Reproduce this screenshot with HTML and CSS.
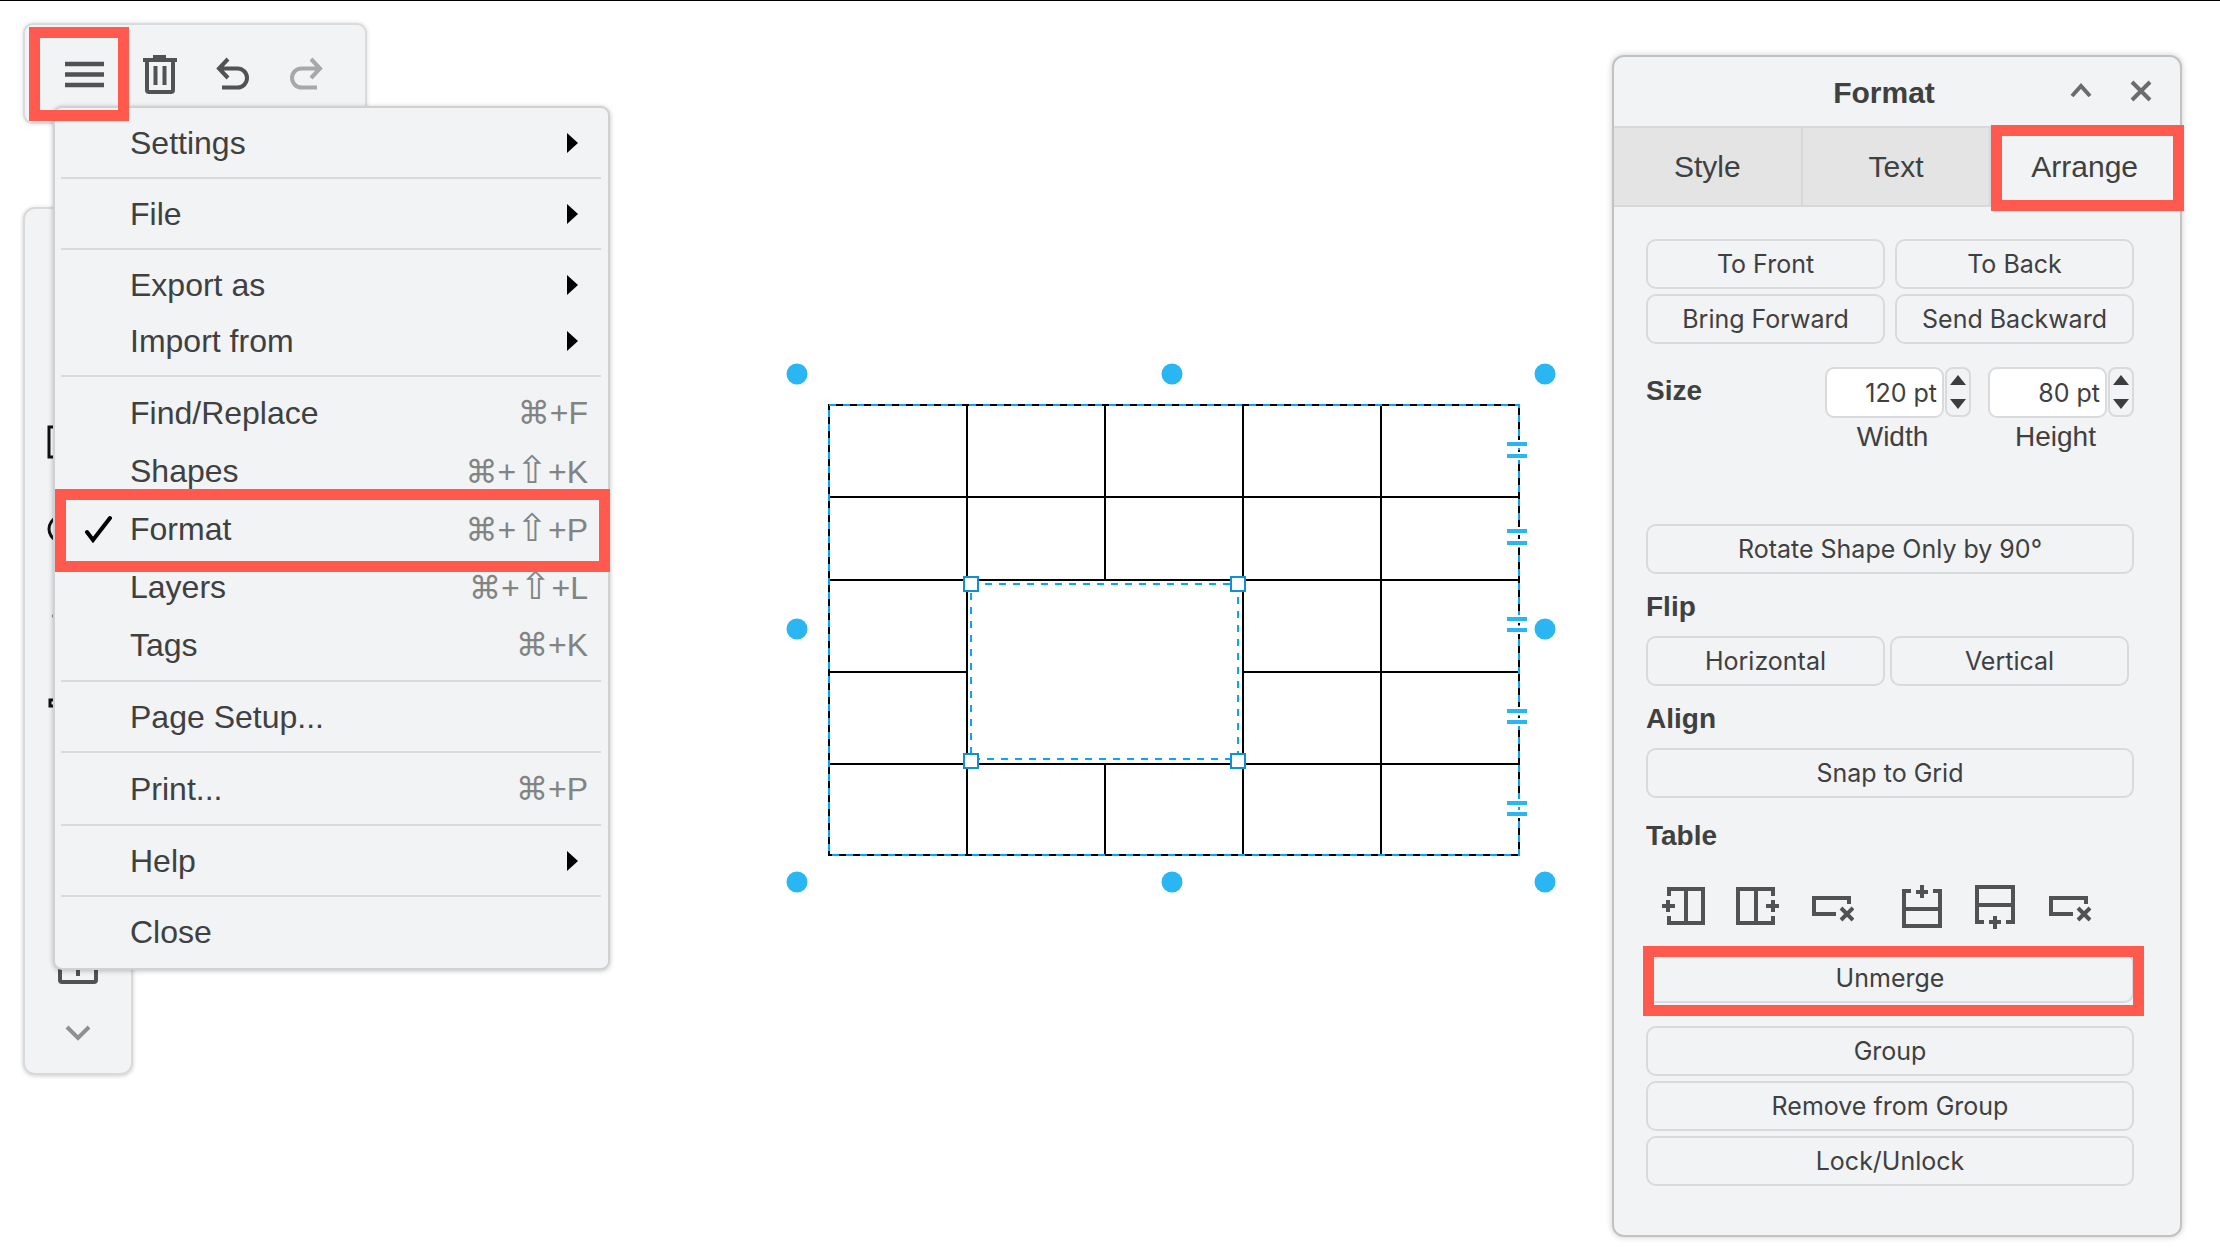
FILE: index.html
```
<!DOCTYPE html>
<html lang="en">
<head>
  <meta charset="UTF-8">
  <meta name="viewport" content="width=device-width, initial-scale=1.0">
  <title>Diagram editor</title>
  <link rel="stylesheet" href="styles.css">
</head>
<body>
  <div class="app">
    <div class="left">
      <div class="toolbar">
        <button class="tool marked" aria-label="Menu">
          <svg width="40" height="40" viewBox="0 0 40 40"><path d="M0 10h39M0 20.500h39M0 31h39" stroke="#505352" stroke-width="4.500"/></svg>
        </button>
        <button class="tool" aria-label="Delete">
          <svg width="36" height="40" viewBox="0 0 36 40" fill="none" stroke="#505352"><path d="M1 6h34M11 3h13" stroke-width="4"/><path d="M5 6v30q0 2 2 2h22q2 0 2-2V6" stroke-width="4"/><path d="M13.500 12v19M22.500 12v19" stroke-width="4"/></svg>
        </button>
        <button class="tool" aria-label="Undo">
          <svg width="36" height="40" viewBox="0 0 36 40" fill="none" stroke="#505352" stroke-width="4"><path d="M13 5L4 14.500l9 9.500M4 14.500h18.500a9.500 9.500 0 0 1 0 19H7"/></svg>
        </button>
        <button class="tool" aria-label="Redo" disabled>
          <svg width="36" height="40" viewBox="0 0 36 40" fill="none" stroke="#a7a9a9" stroke-width="4"><path d="M23 5l9 9.500-9 9.500M32 14.500H13.500a9.500 9.500 0 0 0 0 19H29"/></svg>
        </button>
      </div>

      <div class="sidebar">
        <button class="shape" aria-label="Search"><svg width="30" height="30" viewBox="0 0 30 30" fill="none" stroke="#505352" stroke-width="3"><circle cx="12" cy="12" r="8"/><path d="M18 18l9 9"/></svg></button>
        <button class="shape" aria-label="Note"><svg width="30" height="30" viewBox="0 0 30 30" fill="none" stroke="#111" stroke-width="3"><path d="M3 3h24v17l-7 7H3z"/></svg></button>
        <button class="shape" aria-label="Rectangle"><svg width="62" height="34" viewBox="0 0 62 34" fill="#fff" stroke="#111" stroke-width="3"><path d="M2 2h58v30H2z"/></svg></button>
        <button class="shape" aria-label="Ellipse"><svg width="62" height="40" viewBox="0 0 62 40" fill="#fff" stroke="#111" stroke-width="3"><ellipse cx="31" cy="20" rx="29" ry="18"/></svg></button>
        <button class="shape" aria-label="Line"><svg width="52" height="6" viewBox="0 0 52 6" fill="none" stroke="#8a8c8c" stroke-width="3"><path d="M0 3h52"/></svg></button>
        <button class="shape" aria-label="Connector"><svg width="60" height="10" viewBox="0 0 60 10" fill="#fff" stroke="#111" stroke-width="3"><path d="M2 2h6v6H2zM8 5h44M52 2h6v6h-6z"/></svg></button>
        <button class="shape" aria-label="Freehand"><svg width="30" height="30" viewBox="0 0 30 30" fill="none" stroke="#505352" stroke-width="3"><path d="M3 24c8-22 14 8 24-18"/></svg></button>
        <button class="shape" aria-label="Table"><svg width="30" height="30" viewBox="0 0 30 30" fill="none" stroke="#505352" stroke-width="3"><path d="M3 3h24v24H3zM3 15h24M15 3v24"/></svg></button>
        <button class="shape" aria-label="Insert"><svg width="40" height="40" viewBox="0 0 40 40" fill="none" stroke="#505352" stroke-width="4"><rect x="2" y="2" width="36" height="36" rx="2"/><path d="M20 8v24M8 20h24"/></svg></button>
        <button class="more" aria-label="More"><svg width="26" height="18" viewBox="0 0 26 18" fill="none" stroke="#8f9191" stroke-width="4"><path d="M2 3l11 11L24 3"/></svg></button>
      </div>
    </div>

    <div class="canvas">
      <svg width="772" height="532" viewBox="786 362 772 532" fill="none">
        <!-- table grid -->
        <g stroke="#000" stroke-width="2">
          <rect x="830" y="405" width="690" height="450"/>
          <path d="M830 497h690M830 580h690M830 672h138M1244 672h276M830 764h690"/>
          <path d="M968 405v450M1106 405v175M1106 764v91M1244 405v450M1382 405v450"/>
        </g>
        <!-- selection outlines -->
        <g stroke="#00a8ff" stroke-width="2" stroke-dasharray="7 7">
          <rect x="830" y="405" width="690" height="450"/>
          <rect x="972" y="584" width="267" height="175"/>
        </g>
        <!-- merged cell handles -->
        <g fill="#fff" stroke="#0e8fd6" stroke-width="2">
          <rect x="965" y="577" width="14" height="14"/>
          <rect x="1232" y="577" width="14" height="14"/>
          <rect x="965" y="754" width="14" height="14"/>
          <rect x="1232" y="754" width="14" height="14"/>
        </g>
        <!-- row resize handles -->
        <g stroke="#fff" stroke-width="8">
          <path d="M1508 444h20M1508 456h20M1508 531h20M1508 543h20M1508 619h20M1508 630h20M1508 711h20M1508 722h20M1508 803h20M1508 814h20"/>
        </g>
        <g stroke="#29b6f2" stroke-width="4">
          <path d="M1508 444h20M1508 456h20M1508 531h20M1508 543h20M1508 619h20M1508 630h20M1508 711h20M1508 722h20M1508 803h20M1508 814h20"/>
        </g>
        <g fill="#29b6f2">
          <circle cx="798" cy="374" r="10.500"/>
          <circle cx="1173" cy="374" r="10.500"/>
          <circle cx="1546" cy="374" r="10.500"/>
          <circle cx="798" cy="629" r="10.500"/>
          <circle cx="1546" cy="629" r="10.500"/>
          <circle cx="798" cy="882" r="10.500"/>
          <circle cx="1173" cy="882" r="10.500"/>
          <circle cx="1546" cy="882" r="10.500"/>
        </g>
      </svg>
    </div>

    <div class="panel">
      <div class="panel-head">
        <h2>Format</h2>
        <button class="head-btn" aria-label="Collapse"><svg width="22" height="22" viewBox="0 0 22 22" fill="none" stroke="#6b6d6d" stroke-width="4"><path d="M2 16l9-10 9 10"/></svg></button>
        <button class="head-btn" aria-label="Close panel"><svg width="22" height="22" viewBox="0 0 22 22" fill="none" stroke="#6b6d6d" stroke-width="4"><path d="M2 2l18 18M20 2L2 20"/></svg></button>
      </div>
      <div class="tabs">
        <button class="tab">Style</button>
        <button class="tab">Text</button>
        <button class="tab active marked">Arrange</button>
      </div>

      <div class="panel-body">
        <div class="pair">
          <button class="btn">To Front</button>
          <button class="btn">To Back</button>
          <button class="btn">Bring Forward</button>
          <button class="btn">Send Backward</button>
        </div>

        <div class="size">
          <h3>Size</h3>
          <div class="field">
            <div class="spin">
              <input type="text" id="width" value="120 pt">
              <div class="stepper">
                <button aria-label="Increase width"><svg width="16" height="10" viewBox="0 0 16 10"><path d="M0 10L8 0l8 10z" fill="#3c3e3e"/></svg></button>
                <button aria-label="Decrease width"><svg width="16" height="10" viewBox="0 0 16 10"><path d="M0 0l8 10 8-10z" fill="#3c3e3e"/></svg></button>
              </div>
            </div>
            <label for="width">Width</label>
          </div>
          <div class="field">
            <div class="spin">
              <input type="text" id="height" value="80 pt">
              <div class="stepper">
                <button aria-label="Increase height"><svg width="16" height="10" viewBox="0 0 16 10"><path d="M0 10L8 0l8 10z" fill="#3c3e3e"/></svg></button>
                <button aria-label="Decrease height"><svg width="16" height="10" viewBox="0 0 16 10"><path d="M0 0l8 10 8-10z" fill="#3c3e3e"/></svg></button>
              </div>
            </div>
            <label for="height">Height</label>
          </div>
        </div>

        <button class="btn">Rotate Shape Only by 90°</button>

        <h3>Flip</h3>
        <div class="pair flip">
          <button class="btn">Horizontal</button>
          <button class="btn">Vertical</button>
        </div>

        <h3>Align</h3>
        <button class="btn">Snap to Grid</button>

        <h3 class="table-title">Table</h3>
        <div class="table-tools">
          <button aria-label="Insert column before"><svg width="44" height="44" viewBox="0 0 44 44"><path d="M7 11V4h34v34H7v-7M24 4v34M0 21h13M6 15v12"/></svg></button>
          <button aria-label="Insert column after"><svg width="44" height="44" viewBox="0 0 44 44"><path d="M37 11V4H2v34h35v-7M20 4v34M30 21h13M37 15v12"/></svg></button>
          <button aria-label="Delete column"><svg width="44" height="44" viewBox="0 0 44 44"><path d="M39 19v-6H4v16h22M31 23l12 12M43 23L31 35"/></svg></button>
          <button class="row-tool" aria-label="Insert row above"><svg width="44" height="44" viewBox="0 0 44 44"><path d="M10 6H3v35h36V6h-7M3 24h36M21 0v13M15 7h12"/></svg></button>
          <button aria-label="Insert row below"><svg width="44" height="44" viewBox="0 0 44 44"><path d="M9 37H2V2h36v35h-7M2 20h36M20 31v13M14 37h12"/></svg></button>
          <button aria-label="Delete row"><svg width="44" height="44" viewBox="0 0 44 44"><path d="M37 19v-6H2v16h22M29 23l12 12M41 23L29 35"/></svg></button>
        </div>
        <button class="btn unmerge marked">Unmerge</button>

        <div class="stack">
          <button class="btn">Group</button>
          <button class="btn">Remove from Group</button>
          <button class="btn">Lock/Unlock</button>
        </div>
      </div>
    </div>
  </div>

  <div class="menu">
    <button class="item">Settings<span class="arrow"></span></button>
    <hr>
    <button class="item">File<span class="arrow"></span></button>
    <hr>
    <button class="item">Export as<span class="arrow"></span></button>
    <button class="item">Import from<span class="arrow"></span></button>
    <hr>
    <button class="item keyed">Find/Replace<span class="keys">⌘+F</span></button>
    <button class="item keyed">Shapes<span class="keys">⌘+<span class="shift">⇧</span>+K</span></button>
    <button class="item keyed marked"><svg class="check" width="30" height="28" viewBox="0 0 30 28" fill="none" stroke="#000" stroke-width="4" stroke-linecap="round"><path d="M3 17l6 8L26 3"/></svg>Format<span class="keys">⌘+<span class="shift">⇧</span>+P</span></button>
    <button class="item keyed">Layers<span class="keys">⌘+<span class="shift">⇧</span>+L</span></button>
    <button class="item keyed">Tags<span class="keys">⌘+K</span></button>
    <hr>
    <button class="item">Page Setup...</button>
    <hr>
    <button class="item keyed">Print...<span class="keys">⌘+P</span></button>
    <hr>
    <button class="item">Help<span class="arrow"></span></button>
    <hr>
    <button class="item">Close</button>
  </div>
</body>
</html>
```
FILE: styles.css
```
* {
  box-sizing: border-box;
}

body {
  margin: 0;
  min-height: 100vh;
  border-top: 1px solid #000;
  background: #fff;
  color: #3f4040;
  font-family: "Liberation Sans", Arial, sans-serif;
  overflow: hidden;
}

button {
  margin: 0;
  padding: 0;
  border: none;
  background: none;
  color: inherit;
  font: inherit;
}

svg {
  display: block;
}

.app {
  display: flex;
  align-items: flex-start;
}

/* red callout frames */
.marked {
  position: relative;
}

.marked::after {
  content: "";
  position: absolute;
  z-index: 3;
  border: 11px solid #ff5a4d;
  pointer-events: none;
}

/* left side */
.left {
  padding: 22px 0 0 23px;
}

.toolbar {
  display: flex;
  align-items: center;
  gap: 37px;
  width: 344px;
  height: 101px;
  padding: 0 40px;
  background: #f1f3f5;
  border: 2px solid #d9dadb;
  border-radius: 10px;
  box-shadow: 0 0 4px rgba(0, 0, 0, 0.15);
}

.tool.marked::after {
  inset: -27px -24px -27px -36px;
}

.sidebar {
  display: flex;
  flex-direction: column;
  width: 110px;
  margin-top: 83px;
  padding: 15px 0 14px;
  background: #f1f3f5;
  border: 2px solid #d9dadb;
  border-radius: 12px;
  box-shadow: 0 1px 4px rgba(0, 0, 0, 0.2);
}

.shape,
.more {
  display: flex;
  align-items: center;
  justify-content: center;
  height: 87px;
}

.more {
  height: 52px;
}

/* main menu */
.menu {
  position: absolute;
  z-index: 2;
  top: 106px;
  left: 53px;
  width: 557px;
  padding: 7px 7px 8px 6px;
  background: #f1f3f5;
  border: 2px solid #d0d1d3;
  border-radius: 9px;
  box-shadow: 0 1px 5px rgba(0, 0, 0, 0.25);
}

.menu hr {
  height: 2px;
  margin: 6px 0 7px;
  border: none;
  background: #d9dadb;
}

.item {
  display: flex;
  align-items: center;
  width: 100%;
  height: 56px;
  padding: 0 13px 0 69px;
  font-size: 32px;
  line-height: 36px;
}

.keyed {
  height: 58px;
}

.item.marked::after {
  inset: -11px -9px -14px -6px;
}

.keys {
  margin-left: auto;
  color: #828383;
  font-family: "Liberation Sans", "DejaVu Sans", sans-serif;
}

.shift {
  font-size: 38px;
}

.arrow {
  margin: 0 10px 0 auto;
  border: 10px solid transparent;
  border-left: 11px solid #000;
  border-right: none;
}

.check {
  position: absolute;
  left: 23px;
}

/* drawing area */
.canvas {
  flex: 1;
  display: flex;
  justify-content: flex-end;
  padding: 361px 55px 0 0;
}

/* format panel */
.panel {
  width: 570px;
  margin: 54px 38px 0 0;
  background: #f1f3f5;
  border: 2px solid #c1c2c4;
  border-radius: 12px;
  box-shadow: 0 0 6px rgba(0, 0, 0, 0.2);
}

.panel-head {
  display: flex;
  align-items: center;
  gap: 38px;
  height: 69px;
  padding: 0 28px 2px 80px;
}

.panel-head h2 {
  flex: 1;
  margin: 0;
  padding: 4px 0 0 42px;
  text-align: center;
  font-size: 30px;
  line-height: 34px;
}

.tabs {
  display: grid;
  grid-template-columns: repeat(3, 1fr);
  border-top: 2px solid #d7d8d9;
}

.tab {
  height: 79px;
  background: #e4e4e4;
  border-right: 2px solid #d7d8d9;
  border-bottom: 2px solid #d7d8d9;
  font-size: 30px;
}

.tab.active {
  background: #f1f3f5;
  border-color: #f1f3f5;
}

.tab.marked::after {
  inset: -3px -6px -6px 0;
}

.panel-body {
  display: flex;
  flex-direction: column;
  padding: 32px 46px 49px 32px;
}

.panel h3 {
  margin: 0;
  font-size: 28px;
  line-height: 32px;
  padding: 17px 0 13px;
}

.btn {
  height: 50px;
  border: 2px solid #d9dadb;
  border-radius: 10px;
  font-family: Inter, "Liberation Sans", sans-serif;
  font-size: 25px;
  line-height: 30px;
}

.pair {
  display: grid;
  grid-template-columns: 1fr 1fr;
  gap: 5px 10px;
}

.flip {
  gap: 5px;
  padding-right: 5px;
}

.size {
  display: flex;
  align-items: flex-start;
  gap: 17px;
  height: 157px;
  margin: 23px 0 0;
}

.size h3 {
  flex: 1;
  padding: 8px 0 0;
}

.field {
  width: 146px;
}

.spin {
  display: flex;
  gap: 1px;
}

.spin input {
  width: 119px;
  height: 51px;
  padding: 0 5px;
  border: 2px solid #d9dadb;
  border-radius: 9px;
  background: #fff;
  color: inherit;
  font-family: Inter, "Liberation Sans", sans-serif;
  font-size: 25px;
  text-align: right;
}

.stepper {
  display: flex;
  flex-direction: column;
  justify-content: space-between;
  align-items: center;
  width: 26px;
  height: 50px;
  padding: 6px 0;
  border: 2px solid #d9dadb;
  border-radius: 8px;
}

.field label {
  display: block;
  padding-right: 11px;
  text-align: center;
  font-size: 28px;
  line-height: 38px;
}

.panel .table-title {
  padding: 22px 0 33px;
}

.table-tools {
  display: flex;
  padding-left: 16px;
  gap: 30px;
}

.table-tools path {
  fill: none;
  stroke: #505352;
  stroke-width: 4;
}

.row-tool {
  margin-left: 17px;
}

.unmerge {
  margin: 24px 0 23px;
}

.btn.marked::after {
  inset: -9px -12px -15px -5px;
}

.stack {
  display: grid;
  gap: 5px;
}
```
